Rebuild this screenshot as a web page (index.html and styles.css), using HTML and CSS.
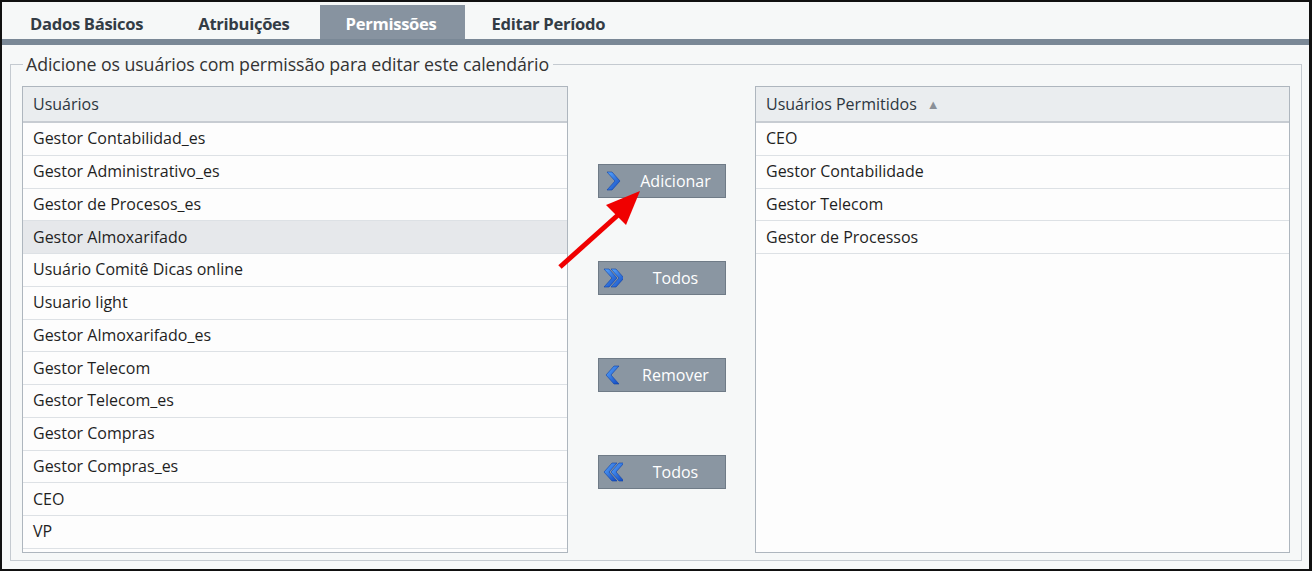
FILE: index.html
```html
<!DOCTYPE html>
<html lang="pt-BR">
  <head>
    <meta charset="UTF-8" />
    <title>Permissões do calendário</title>
    <link rel="stylesheet" href="styles.css">
  </head>
  <body>
    <div class="frame">
      <nav class="tabs">
        <a class="tab">Dados Básicos</a>
        <a class="tab">Atribuições</a>
        <a class="tab active">Permissões</a>
        <a class="tab">Editar Período</a>
      </nav>
      <div class="tabs-bar"></div>

      <fieldset class="perm">
        <legend>Adicione os usuários com permissão para editar este calendário</legend>

        <div class="grid">
          <div class="list">
            <div class="list-head">Usuários</div>
            <ul class="list-body">
              <li>Gestor Contabilidad_es</li>
              <li>Gestor Administrativo_es</li>
              <li>Gestor de Procesos_es</li>
              <li class="selected">Gestor Almoxarifado</li>
              <li>Usuário Comitê Dicas online</li>
              <li>Usuario light</li>
              <li>Gestor Almoxarifado_es</li>
              <li>Gestor Telecom</li>
              <li>Gestor Telecom_es</li>
              <li>Gestor Compras</li>
              <li>Gestor Compras_es</li>
              <li>CEO</li>
              <li>VP</li>
            </ul>
          </div>

          <div class="actions">
            <button class="btn">
              <svg class="ico" viewBox="0 0 20 20"><use href="#chev-r" /></svg>
              <span>Adicionar</span>
            </button>
            <button class="btn">
              <svg class="ico" viewBox="0 0 20 20"><use href="#chev-r" x="-3" /><use href="#chev-r" x="4" /></svg>
              <span>Todos</span>
            </button>
            <button class="btn">
              <svg class="ico" viewBox="0 0 20 20"><use href="#chev-l" /></svg>
              <span>Remover</span>
            </button>
            <button class="btn">
              <svg class="ico" viewBox="0 0 20 20"><use href="#chev-l" x="-2" /><use href="#chev-l" x="5" /></svg>
              <span>Todos</span>
            </button>
          </div>

          <div class="list">
            <div class="list-head">Usuários Permitidos <span class="sort">&#9650;</span></div>
            <ul class="list-body">
              <li>CEO</li>
              <li>Gestor Contabilidade</li>
              <li>Gestor Telecom</li>
              <li>Gestor de Processos</li>
            </ul>
          </div>
        </div>
      </fieldset>

      <!-- pointer over the Adicionar button -->
      <svg class="pointer" width="100" height="90" viewBox="0 0 100 90">
        <line x1="4" y1="80" x2="62" y2="28" stroke="#f00000" stroke-width="5" />
        <polygon points="84,4 50,18 70,38" fill="#f00000" />
      </svg>
    </div>

    <svg width="0" height="0" style="position:absolute">
      <defs>
        <linearGradient id="blue" x1="0" y1="0" x2="1" y2="1">
          <stop offset="0" stop-color="#5aa8ff" />
          <stop offset="1" stop-color="#1048c0" />
        </linearGradient>
        <polygon id="chev-r" points="4,1 9,1 17,10 9,19 4,19 12,10" fill="url(#blue)" stroke="#0d3fa6" stroke-width="0.6" />
        <polygon id="chev-l" points="16,1 11,1 3,10 11,19 16,19 8,10" fill="url(#blue)" stroke="#0d3fa6" stroke-width="0.6" />
      </defs>
    </svg>
  </body>
</html>
```

FILE: styles.css
```css
* {
  box-sizing: border-box;
}

html,
body {
  margin: 0;
  padding: 0;
}

body {
  font-family: "Open Sans", "Noto Sans", sans-serif;
  color: #222;
}

.frame {
  position: relative;
  width: 1312px;
  height: 571px;
  border: 2px solid #111;
  border-right-width: 3px;
  background: #f6f8f8;
  display: flex;
  flex-direction: column;
}

/* tabs */
.tabs {
  display: flex;
  padding: 3px 0 0 1px;
  height: 37px;
}

.tab {
  display: flex;
  align-items: center;
  padding: 2px 28px 0 27px;
  font-size: 16.6px;
  font-weight: 700;
  color: #333c45;
  letter-spacing: -0.3px;
}

.tab:nth-child(2) {
  padding-right: 30px;
}

.tab.active {
  background: #8793a0;
  color: #fff;
  padding-left: 26px;
}

.tabs-bar {
  height: 6px;
  background: #7a8896;
}

/* fieldset box */
.perm {
  flex: 1;
  margin: 7px 7px 8px 8px;
  padding: 10px 11px 7px 11px;
  border: 1px solid #c4cad0;
  min-width: 0;
}

.perm legend {
  padding: 0 4px 0 3px;
  margin-left: 1px;
  font-size: 17.8px;
  color: #333;
  letter-spacing: -0.1px;
}

.grid {
  display: grid;
  grid-template-columns: 546px 1fr 535px;
  height: 100%;
}

/* lists */
.list {
  border: 1px solid #aeb6be;
  background: #fdfdfd;
  display: flex;
  flex-direction: column;
}

.list-head {
  height: 36px;
  flex: none;
  display: flex;
  align-items: center;
  padding: 0 10px;
  background: #eaedef;
  border-bottom: 2px solid #c7ccd2;
  font-size: 16px;
  color: #2d3640;
}

.sort {
  font-size: 13px;
  color: #8a9097;
  margin-left: 10px;
}

.list-body {
  list-style: none;
  margin: 0;
  padding: 0;
}

.list-body li {
  height: 32.75px;
  display: flex;
  align-items: center;
  padding: 0 10px 1px;
  border-bottom: 1px solid #dde1e5;
  font-size: 16px;
  color: #1f1f1f;
}

.list-body li.selected {
  background: #e6e8eb;
}

/* middle buttons */
.actions {
  display: flex;
  flex-direction: column;
  align-items: center;
  padding-top: 78px;
  gap: 63px;
}

.btn {
  width: 128px;
  height: 34px;
  display: flex;
  align-items: center;
  padding: 0 0 0 4px;
  background: #8a96a2;
  border: 1px solid #6f7b87;
  color: #fff;
  font-family: inherit;
  font-size: 16px;
}

.btn .ico {
  width: 20px;
  height: 20px;
  flex: none;
}

.btn span {
  flex: 1;
  text-align: center;
  padding-left: 4px;
}

/* red pointer overlay */
.pointer {
  position: absolute;
  left: 554px;
  top: 185px;
}
```
